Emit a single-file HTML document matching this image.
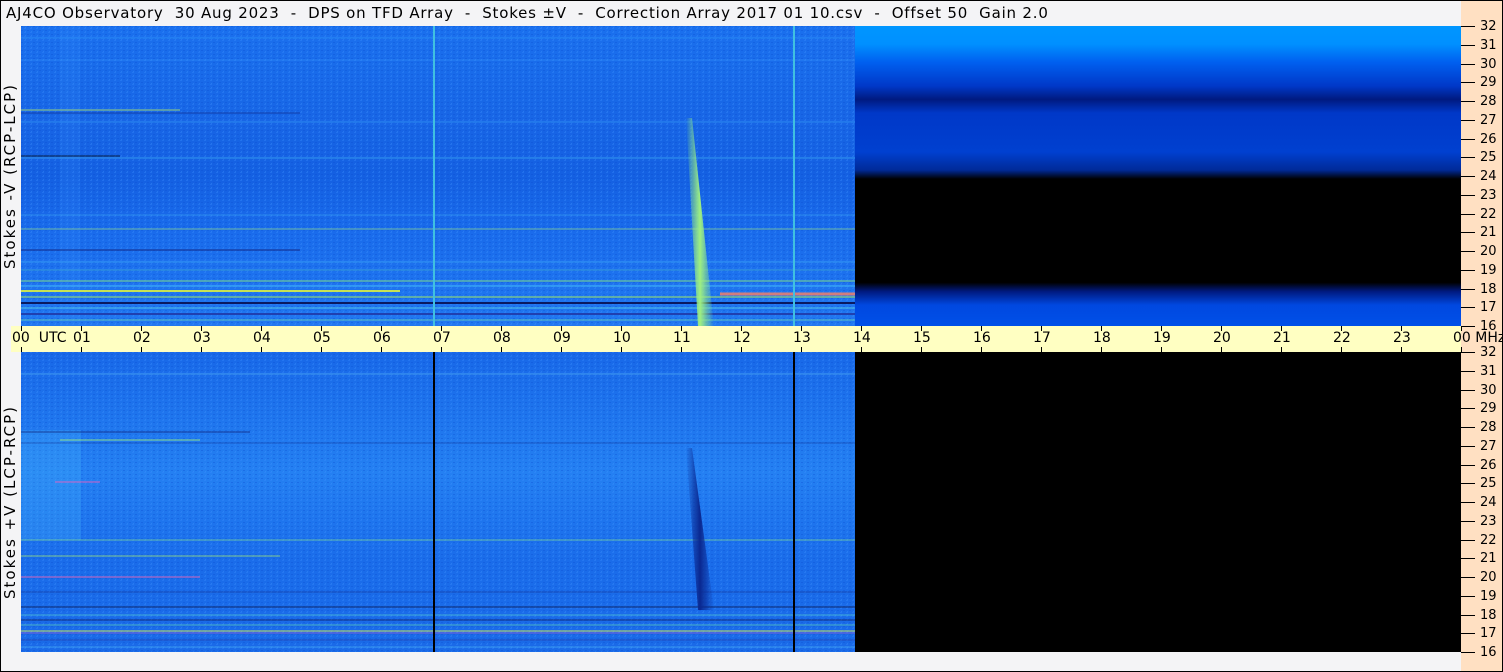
<!DOCTYPE html>
<html><head><meta charset="utf-8"><style>
*{margin:0;padding:0;box-sizing:border-box}
body{width:1503px;height:672px;overflow:hidden;background:#f4f4f6;font-family:"DejaVu Sans","Liberation Sans",sans-serif;position:relative}
.frame{position:absolute;left:0;top:0;width:1503px;height:672px;border:1px solid #000;pointer-events:none;z-index:10}
.title{position:absolute;left:6px;top:4px;font-size:15px;color:#000;white-space:pre;letter-spacing:0.8px}
.rc{position:absolute;left:1461px;top:1px;width:41px;height:670px;background:#ffe0c2}
.vl{position:absolute;font-size:15px;white-space:pre;transform:rotate(-90deg);transform-origin:center;width:240px;text-align:center;left:-110px;line-height:18px;letter-spacing:2px}
.fl{position:absolute;left:1480px;font-size:13px;line-height:13px}
.tk{position:absolute;left:1461px;width:14px;height:1px;background:#000}
.bar{position:absolute;left:11px;top:326px;width:1450px;height:26px;background:#ffffc2}
.hl{position:absolute;top:330px;font-size:14px;line-height:16px;white-space:nowrap}
.ht{position:absolute;width:1px;height:5px;background:#000}
</style></head><body>
<div class="title">AJ4CO Observatory  30 Aug 2023  -  DPS on TFD Array  -  Stokes ±V  -  Correction Array 2017 01 10.csv  -  Offset 50  Gain 2.0</div>
<div class="rc"></div>
<div class="vl" style="top:167px">Stokes -V (RCP-LCP)</div>
<div class="vl" style="top:493px">Stokes +V (LCP-RCP)</div>

<svg style="position:absolute;left:0;top:0" width="1503" height="672">
<defs>
<linearGradient id="tr" x1="0" y1="26" x2="0" y2="326" gradientUnits="userSpaceOnUse">
<stop offset="0" stop-color="#0096ff"/><stop offset="0.06" stop-color="#0090ff"/>
<stop offset="0.12" stop-color="#0060f0"/><stop offset="0.2" stop-color="#0038c8"/>
<stop offset="0.245" stop-color="#001a80"/><stop offset="0.29" stop-color="#0038c8"/>
<stop offset="0.42" stop-color="#0040d0"/><stop offset="0.48" stop-color="#002a98"/>
<stop offset="0.51" stop-color="#000"/><stop offset="0.855" stop-color="#000"/>
<stop offset="0.885" stop-color="#001a80"/><stop offset="0.93" stop-color="#0048e0"/>
<stop offset="1" stop-color="#0050e8"/></linearGradient>
<linearGradient id="tp" x1="0" y1="26" x2="0" y2="326" gradientUnits="userSpaceOnUse">
<stop offset="0" stop-color="#1a70ee"/><stop offset="0.3" stop-color="#1866e6"/>
<stop offset="0.5" stop-color="#1460e2"/><stop offset="0.7" stop-color="#1a6cec"/>
<stop offset="1" stop-color="#2078f0"/></linearGradient>
<linearGradient id="bp" x1="0" y1="352" x2="0" y2="652" gradientUnits="userSpaceOnUse">
<stop offset="0" stop-color="#1868e8"/><stop offset="0.4" stop-color="#2480f2"/>
<stop offset="0.7" stop-color="#1a6cea"/><stop offset="1" stop-color="#1a6ae8"/></linearGradient>
<linearGradient id="bu" x1="0" y1="0" x2="1" y2="0">
<stop offset="0" stop-color="#90f080" stop-opacity="0"/><stop offset="0.5" stop-color="#a0f080"/><stop offset="1" stop-color="#90f080" stop-opacity="0"/></linearGradient>
<linearGradient id="bd" x1="0" y1="0" x2="1" y2="0">
<stop offset="0" stop-color="#0a2890" stop-opacity="0"/><stop offset="0.5" stop-color="#0a2890"/><stop offset="1" stop-color="#0a2890" stop-opacity="0"/></linearGradient>
<pattern id="nz" width="6" height="4" patternUnits="userSpaceOnUse">
<rect width="2" height="1" fill="#3a8cff" opacity=".35"/><rect x="3" y="2" width="2" height="1" fill="#0a4ed0" opacity=".35"/>
<rect x="1" y="3" width="1" height="1" fill="#48a0ff" opacity=".3"/></pattern>
</defs>
<rect x="21" y="26" width="834" height="300" fill="url(#tp)"/>
<rect x="21" y="26" width="834" height="300" fill="url(#nz)"/>
<rect x="855" y="26" width="606" height="300" fill="url(#tr)"/>
<rect x="60" y="26" width="20" height="300" fill="#40a0ff" opacity=".12"/>
<g stroke-width="1">
<line x1="21" y1="38" x2="855" y2="38" stroke="#3aa8ff" opacity=".5"/>
<line x1="21" y1="60" x2="855" y2="60" stroke="#3aa0ff" opacity=".4"/>
<line x1="21" y1="110" x2="180" y2="110" stroke="#d0ff50" opacity=".7"/>
<line x1="21" y1="113" x2="300" y2="113" stroke="#0a2080" opacity=".6"/>
<line x1="21" y1="122" x2="855" y2="122" stroke="#40b0ff" opacity=".5"/>
<line x1="21" y1="156" x2="120" y2="156" stroke="#000" opacity=".7"/>
<line x1="21" y1="158" x2="855" y2="158" stroke="#50d0ff" opacity=".5"/>
<line x1="21" y1="215" x2="855" y2="215" stroke="#50c8ff" opacity=".4"/>
<line x1="21" y1="229" x2="855" y2="229" stroke="#c0ff60" opacity=".5"/>
<line x1="21" y1="250" x2="300" y2="250" stroke="#101060" opacity=".7"/>
<line x1="21" y1="262" x2="855" y2="262" stroke="#50c8ff" opacity=".5"/>
<line x1="21" y1="270" x2="855" y2="270" stroke="#60e0c0" opacity=".4"/>
<line x1="21" y1="281" x2="855" y2="281" stroke="#a0ff60" opacity=".7"/>
<line x1="21" y1="286" x2="855" y2="286" stroke="#50d0ff" opacity=".8"/>
<line x1="21" y1="291" x2="400" y2="291" stroke="#f0ff30" stroke-width="2" opacity=".8"/>
<line x1="720" y1="294" x2="855" y2="294" stroke="#ff8060" stroke-width="3" opacity=".8"/>
<line x1="21" y1="297" x2="855" y2="297" stroke="#c0ff40" opacity=".8"/>
<line x1="21" y1="303" x2="855" y2="303" stroke="#0a1a60" stroke-width="2"/>
<line x1="21" y1="308" x2="855" y2="308" stroke="#60e0e0" opacity=".7"/>
<line x1="21" y1="314" x2="855" y2="314" stroke="#2040b0" stroke-width="2"/>
<line x1="21" y1="320" x2="855" y2="320" stroke="#80f0a0" opacity=".6"/>
</g>
<line x1="434" y1="26" x2="434" y2="326" stroke="#40c0e0" stroke-width="2"/>
<line x1="794" y1="26" x2="794" y2="326" stroke="#40c0e0" stroke-width="2"/>
<polygon points="686,118 692,118 714,326 698,326" fill="url(#bu)"/>
<rect x="21" y="352" width="834" height="300" fill="url(#bp)"/>
<rect x="21" y="352" width="834" height="300" fill="url(#nz)"/>
<rect x="855" y="352" width="606" height="300" fill="#000"/>
<rect x="21" y="430" width="60" height="110" fill="#50c8ff" opacity=".2"/>
<g>
<line x1="21" y1="374" x2="855" y2="374" stroke="#80e8ff" opacity=".4"/>
<line x1="21" y1="432" x2="250" y2="432" stroke="#0a1a70" opacity=".7"/>
<line x1="60" y1="440" x2="200" y2="440" stroke="#b0ff60" opacity=".7"/>
<line x1="21" y1="443" x2="855" y2="443" stroke="#0a2080" opacity=".4"/>
<line x1="55" y1="482" x2="100" y2="482" stroke="#ff60c0" opacity=".8"/>
<line x1="21" y1="540" x2="855" y2="540" stroke="#a0ff70" opacity=".5"/>
<line x1="21" y1="556" x2="280" y2="556" stroke="#c0ff50" opacity=".6"/>
<line x1="21" y1="577" x2="200" y2="577" stroke="#ff60b0" opacity=".8"/>
<line x1="21" y1="592" x2="855" y2="592" stroke="#0a2080" opacity=".5"/>
<line x1="21" y1="607" x2="855" y2="607" stroke="#0a1a50" opacity=".8"/>
<line x1="21" y1="615" x2="855" y2="615" stroke="#60e0d0" opacity=".6"/>
<line x1="21" y1="620" x2="855" y2="620" stroke="#0a1a60" opacity=".8"/>
<line x1="21" y1="625" x2="855" y2="625" stroke="#70f0a0" opacity=".5"/>
<line x1="21" y1="631" x2="855" y2="631" stroke="#f0ff40" opacity=".8"/>
<line x1="21" y1="633" x2="855" y2="633" stroke="#ff50c0" opacity=".4"/>
<line x1="21" y1="640" x2="855" y2="640" stroke="#2040b0" opacity=".8"/>
<line x1="21" y1="647" x2="855" y2="647" stroke="#60d0ff" opacity=".5"/>
</g>
<line x1="434" y1="352" x2="434" y2="652" stroke="#000" stroke-width="2"/>
<line x1="794" y1="352" x2="794" y2="652" stroke="#000" stroke-width="2"/>
<polygon points="686,448 692,448 714,610 698,610" fill="url(#bd)"/>
</svg>

<div class="bar"></div>
<div id="ax"></div>
<div id="fr"></div>
<div class="frame"></div>
<script>
var ax=document.getElementById('ax'),h='';
for(var i=0;i<=24;i++){var x=21+i*60;
h+='<div class="ht" style="left:'+x+'px;top:326px"></div><div class="ht" style="left:'+x+'px;top:347px"></div>';
var t=(i==24?'00 MHz':(i<10?'0'+i:''+i));
if(i==0)h+='<div class="hl" style="left:12px">00&nbsp; UTC</div>';
else h+='<div class="hl" style="left:'+(x-8)+'px">'+t+'</div>';}
ax.innerHTML=h;
var fr=document.getElementById('fr'),g='';
for(var p=0;p<2;p++){var base=p?352:26;
for(var m=32;m>=16;m--){var y=Math.round(base+(32-m)*18.75);
g+='<div class="tk" style="top:'+y+'px"></div><div class="fl" style="top:'+(y-6)+'px">'+m+'</div>';}}
fr.innerHTML=g;
</script>
</body></html>
